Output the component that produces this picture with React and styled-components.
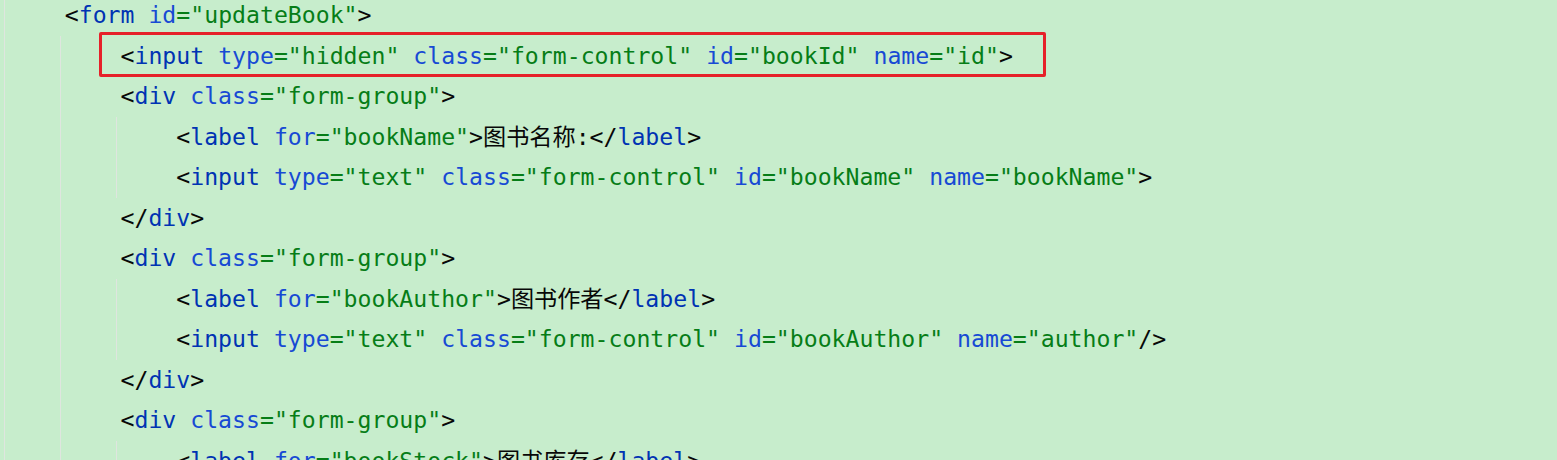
import { styled, createGlobalStyle } from 'styled-components'

const GlobalStyle = createGlobalStyle`
  html, body {
    margin: 0;
    background: #c7edcc;
    overflow: hidden;
  }
`

const colors = {
  p: '#080808',
  t: '#0033b3',
  a: '#174ad4',
  v: '#067d17',
  x: '#080808',
  s: '#080808',
}

const open = (name, attrs = [], end = '>') => [
  ['p', '<'],
  ['t', name],
  ...attrs.flatMap(([k, v]) => [
    ['s', ' '],
    ['a', k],
    ['v', `="${v}"`],
  ]),
  ['p', end],
]

const close = (name) => [
  ['p', '</'],
  ['t', name],
  ['p', '>'],
]

const lines = [
  { level: 1, tokens: open('form', [['id', 'updateBook']]) },
  {
    level: 2,
    marked: true,
    tokens: open('input', [
      ['type', 'hidden'],
      ['class', 'form-control'],
      ['id', 'bookId'],
      ['name', 'id'],
    ]),
  },
  { level: 2, tokens: open('div', [['class', 'form-group']]) },
  {
    level: 3,
    tokens: [
      ...open('label', [['for', 'bookName']]),
      ['x', '图书名称:'],
      ...close('label'),
    ],
  },
  {
    level: 3,
    tokens: open('input', [
      ['type', 'text'],
      ['class', 'form-control'],
      ['id', 'bookName'],
      ['name', 'bookName'],
    ]),
  },
  { level: 2, tokens: close('div') },
  { level: 2, tokens: open('div', [['class', 'form-group']]) },
  {
    level: 3,
    tokens: [
      ...open('label', [['for', 'bookAuthor']]),
      ['x', '图书作者'],
      ...close('label'),
    ],
  },
  {
    level: 3,
    tokens: open(
      'input',
      [
        ['type', 'text'],
        ['class', 'form-control'],
        ['id', 'bookAuthor'],
        ['name', 'author'],
      ],
      '/>'
    ),
  },
  { level: 2, tokens: close('div') },
  { level: 2, tokens: open('div', [['class', 'form-group']]) },
  {
    level: 3,
    tokens: [
      ...open('label', [['for', 'bookStock']]),
      ['x', '图书库存'],
      ...close('label'),
    ],
  },
]

export default function App() {
  return (
    <>
      <GlobalStyle />
      <Editor>
        {lines.map((line, i) => (
          <Line key={i}>
            {Array.from({ length: line.level }).map((_, j) => (
              <Guide key={j} />
            ))}
            <Code>
              <Content $marked={line.marked}>
                {line.tokens.map(([kind, text], k) => (
                  <Token key={k} $kind={kind}>
                    {text}
                  </Token>
                ))}
              </Content>
            </Code>
          </Line>
        ))}
      </Editor>
    </>
  )
}

const Editor = styled.div`
  margin-top: -5px;
  padding-left: 4px;
  font-family: 'DejaVu Sans Mono', 'Noto Sans CJK SC', monospace;
  font-size: 23.17px;
  line-height: 40.5px;
  white-space: pre;
`

const Line = styled.div`
  display: flex;
  height: 40.5px;
`

const Guide = styled.span`
  flex: none;
  width: 4ch;
  border-left: 1px solid #dfe5df;
  box-sizing: border-box;
`

const Code = styled.span`
  padding-left: 5px;
`

const Content = styled.span`
  position: relative;
  display: inline-block;
  height: 40.5px;

  ${(props) =>
    props.$marked &&
    `
    &::after {
      content: '';
      position: absolute;
      top: -4px;
      bottom: -1px;
      left: -22px;
      right: -33px;
      border: 3px solid #e62129;
      border-radius: 2px;
    }
  `}
`

const Token = styled.span`
  color: ${(props) => colors[props.$kind]};
`
